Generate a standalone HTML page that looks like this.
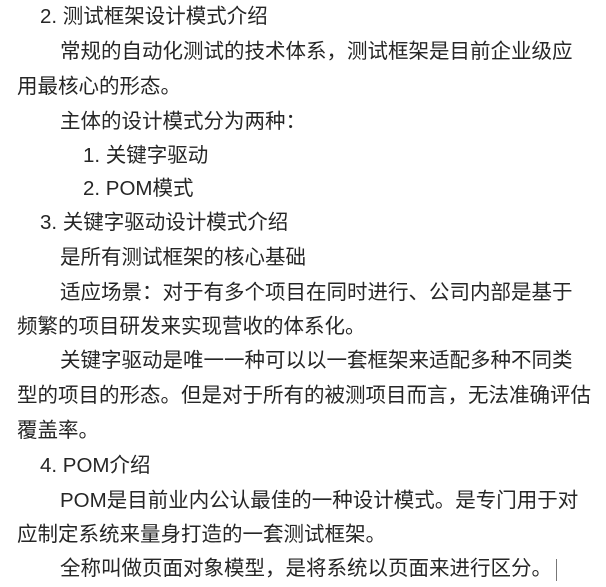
<!DOCTYPE html>
<html><head><meta charset="utf-8"><style>
html,body{margin:0;padding:0;background:#fff;width:606px;height:587px;overflow:hidden}
.l{position:absolute;white-space:nowrap;font-family:"Liberation Sans","Noto Sans CJK SC",sans-serif;font-size:20.5px;line-height:24px;color:#262626}
</style></head><body>
<div class="l" style="left:40px;top:5px">2. 测试框架设计模式介绍</div>
<div class="l" style="left:60px;top:40px">常规的自动化测试的技术体系，测试框架是目前企业级应</div>
<div class="l" style="left:17px;top:75px">用最核心的形态。</div>
<div class="l" style="left:60px;top:110px">主体的设计模式分为两种：</div>
<div class="l" style="left:83px;top:144px">1. 关键字驱动</div>
<div class="l" style="left:83px;top:177px">2. POM模式</div>
<div class="l" style="left:40px;top:211px">3. 关键字驱动设计模式介绍</div>
<div class="l" style="left:60px;top:246px">是所有测试框架的核心基础</div>
<div class="l" style="left:60px;top:281px">适应场景：对于有多个项目在同时进行、公司内部是基于</div>
<div class="l" style="left:17px;top:315px">频繁的项目研发来实现营收的体系化。</div>
<div class="l" style="left:60px;top:349px">关键字驱动是唯一一种可以以一套框架来适配多种不同类</div>
<div class="l" style="left:17px;top:384px">型的项目的形态。但是对于所有的被测项目而言，无法准确评估</div>
<div class="l" style="left:17px;top:419px">覆盖率。</div>
<div class="l" style="left:40px;top:454px">4. POM介绍</div>
<div class="l" style="left:60px;top:489px">POM是目前业内公认最佳的一种设计模式。是专门用于对</div>
<div class="l" style="left:17px;top:523px">应制定系统来量身打造的一套测试框架。</div>
<div class="l" style="left:60px;top:557px">全称叫做页面对象模型，是将系统以页面来进行区分。<span style="display:inline-block;width:1px;height:22px;background:#777;vertical-align:middle;margin-left:4px"></span></div>
</body></html>
